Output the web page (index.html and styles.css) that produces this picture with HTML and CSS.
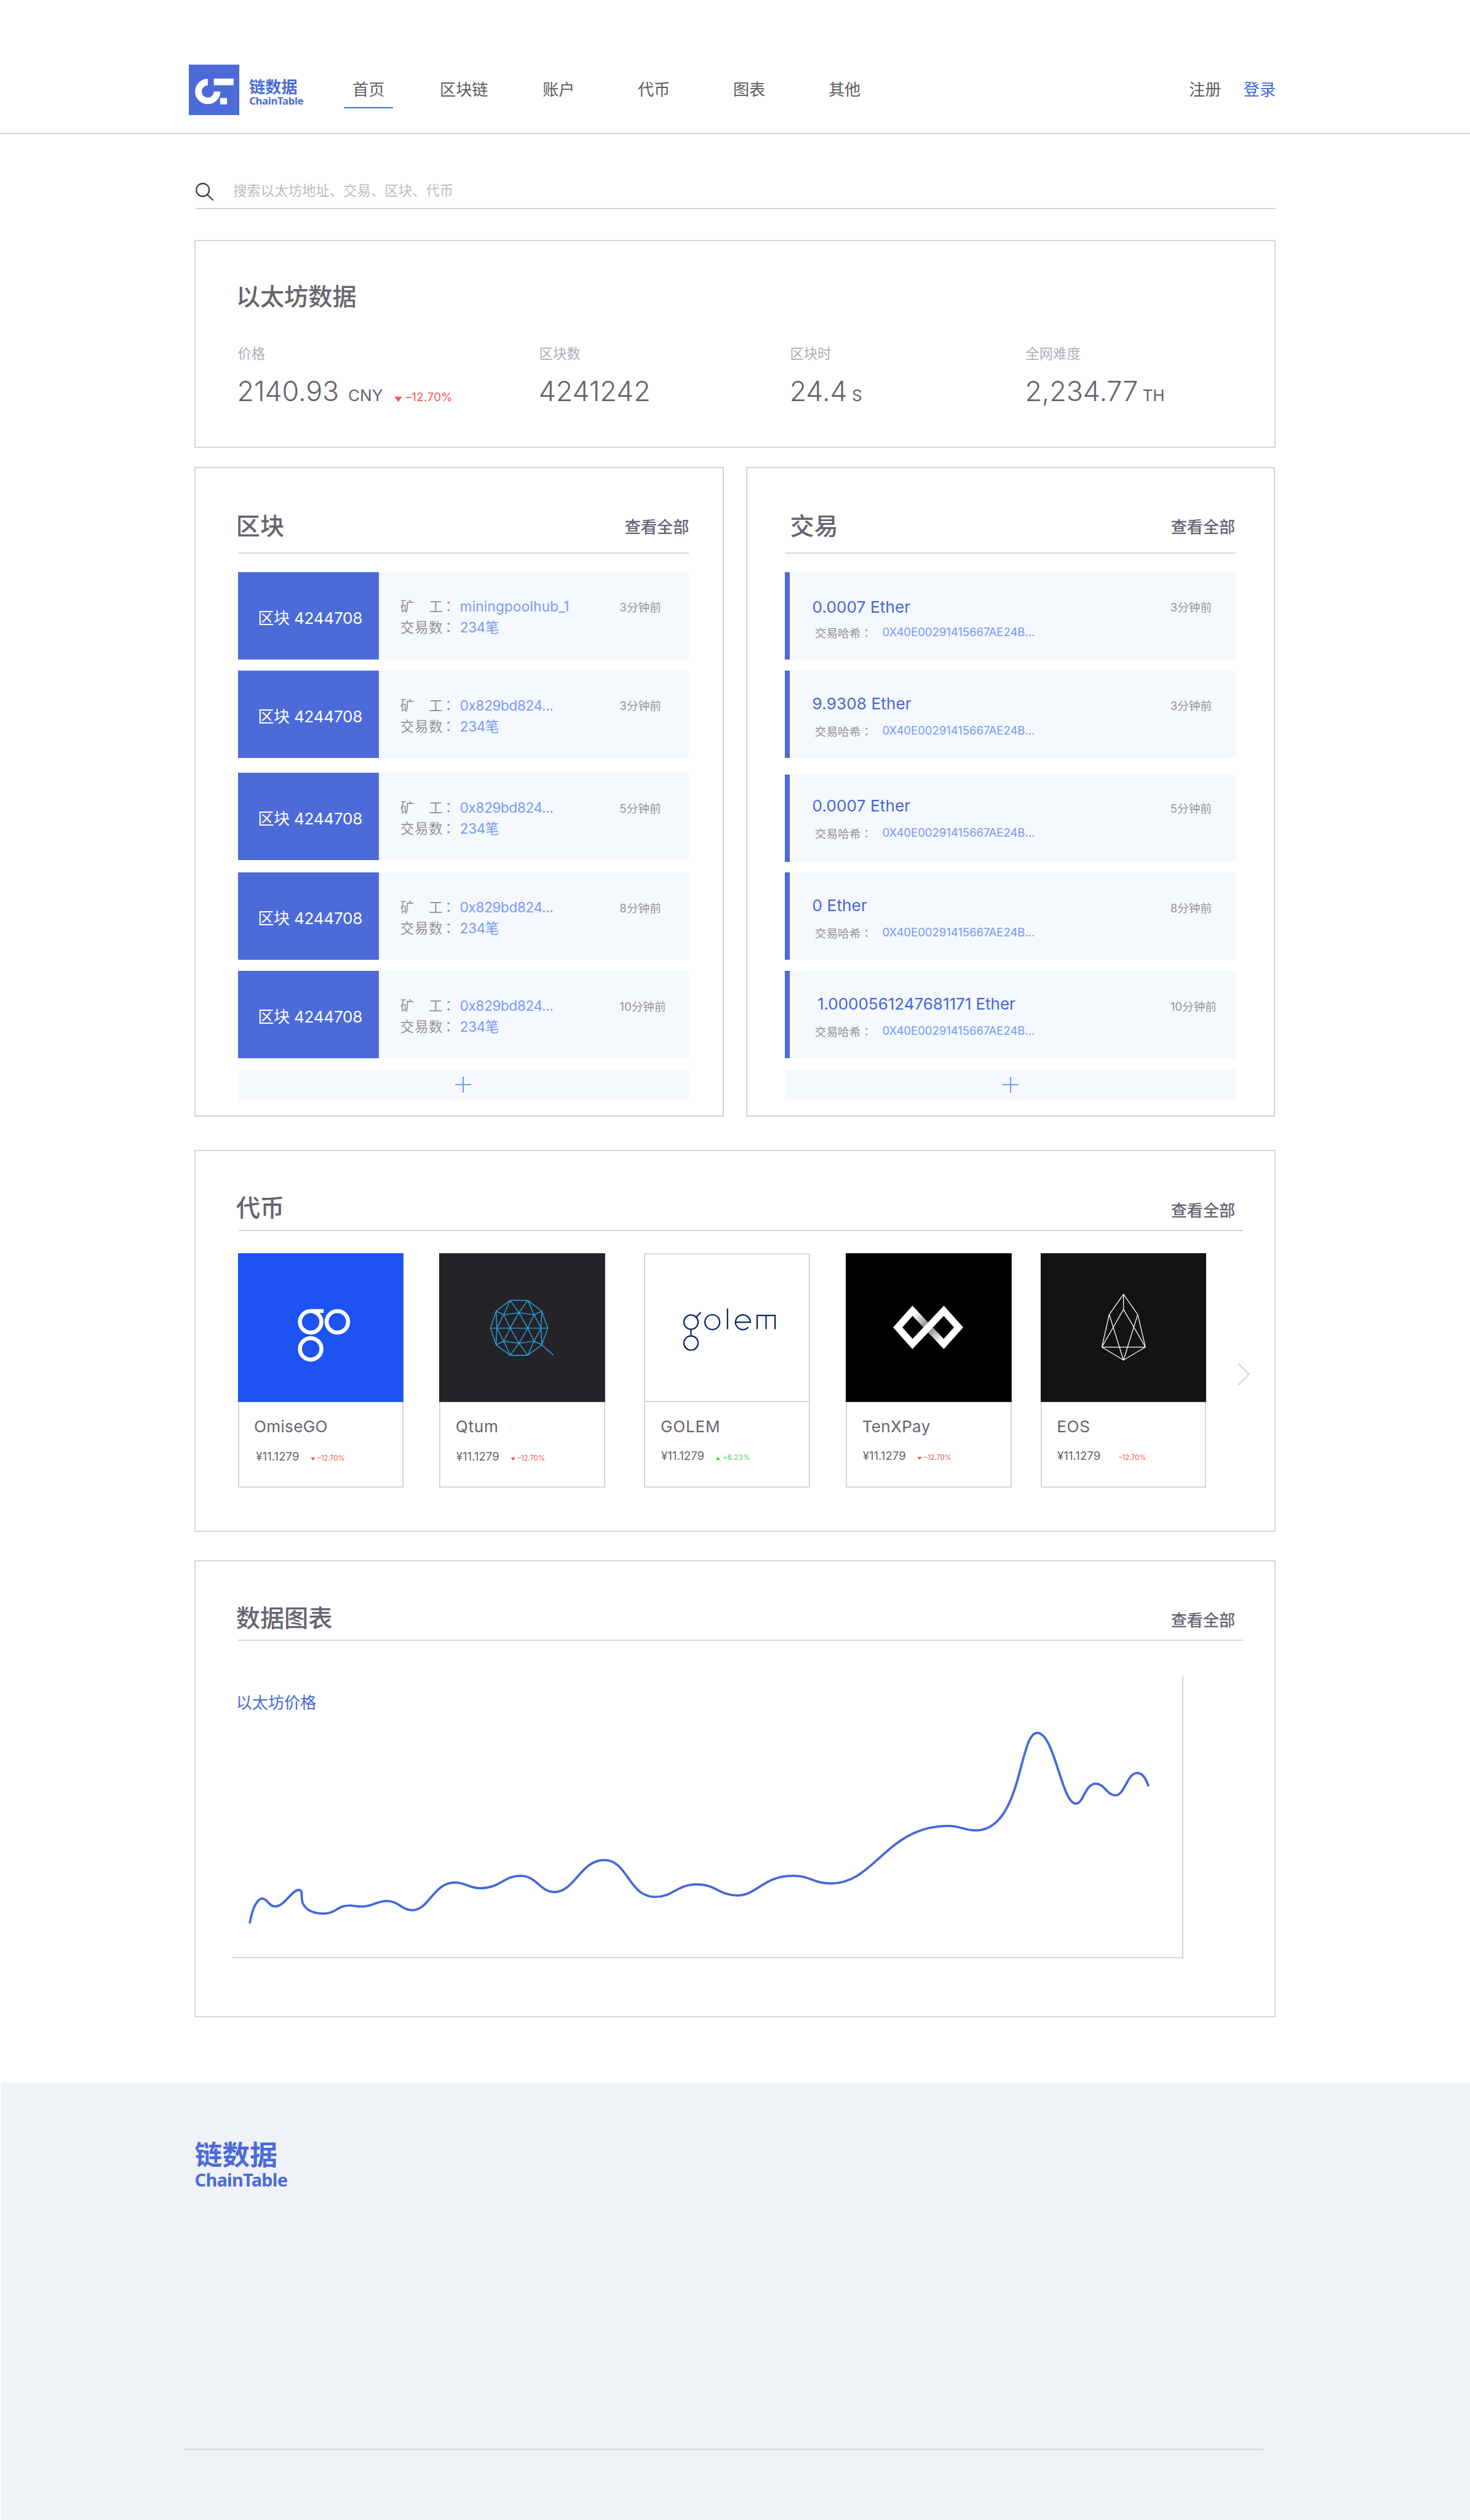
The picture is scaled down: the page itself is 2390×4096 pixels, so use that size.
FILE: index.html
```html
<!DOCTYPE html>
<html>
<head>
<meta charset="utf-8">
<title>链数据 ChainTable</title>
<link rel="stylesheet" href="styles.css">
</head>
<body>
<header class="header">
  <a class="logo">
    <svg class="logo-mark" viewBox="0 0 88 88">
      <rect width="88" height="88" fill="#4c6bd8"/>
      <path d="M33 30.500A16.300 16.300 0 1 0 49.300 46.800" fill="none" stroke="#fff" stroke-width="11.500"/>
      <path d="M43.500 24.500h34.500v11.500h-34.500zM54.500 58h12v11.500h-12z" fill="#fff"/>
    </svg>
    <span class="logo-text"><b class="logo-cn">链数据</b><b class="logo-en">ChainTable</b></span>
  </a>
  <nav class="nav">
    <a class="nav-item active">首页</a>
    <a class="nav-item">区块链</a>
    <a class="nav-item">账户</a>
    <a class="nav-item">代币</a>
    <a class="nav-item">图表</a>
    <a class="nav-item">其他</a>
  </nav>
  <div class="auth"><a>注册</a><a class="login">登录</a></div>
</header>

<main class="main">
  <div class="search">
    <svg class="search-icon" viewBox="0 0 32 32"><g fill="none" stroke="#444" stroke-width="2.500" stroke-linecap="round"><circle cx="12.500" cy="12.500" r="11.200"/><path d="M20.500 21l9.500 9"/></g></svg>
    <span>搜索以太坊地址、交易、区块、代币</span>
  </div>

  <section class="card stats">
    <h2 class="title">以太坊数据</h2>
    <div class="stat-row">
      <div class="stat"><div class="stat-label">价格</div><div class="stat-value">2140.93<span class="unit unit-cny">CNY</span><i class="tri tri-lg"></i><span class="drop">–12.70%</span></div></div>
      <div class="stat"><div class="stat-label">区块数</div><div class="stat-value">4241242</div></div>
      <div class="stat"><div class="stat-label">区块时</div><div class="stat-value">24.4<span class="unit">S</span></div></div>
      <div class="stat"><div class="stat-label">全网难度</div><div class="stat-value">2,234.77<span class="unit">TH</span></div></div>
    </div>
  </section>

  <div class="columns">
    <section class="card blocks">
      <div class="head"><h2 class="title">区块</h2><a class="more">查看全部</a></div>
      <div class="row"><div class="badge">区块 4244708</div><dl class="info"><dt>矿　工<i>：</i></dt><dd class="pool">miningpoolhub_1</dd><dt>交易数<i>：</i></dt><dd>234笔</dd></dl><time>3分钟前</time></div>
      <div class="row"><div class="badge">区块 4244708</div><dl class="info"><dt>矿　工<i>：</i></dt><dd>0x829bd824...</dd><dt>交易数<i>：</i></dt><dd>234笔</dd></dl><time>3分钟前</time></div>
      <div class="row row-3"><div class="badge">区块 4244708</div><dl class="info"><dt>矿　工<i>：</i></dt><dd>0x829bd824...</dd><dt>交易数<i>：</i></dt><dd>234笔</dd></dl><time>5分钟前</time></div>
      <div class="row row-4"><div class="badge">区块 4244708</div><dl class="info"><dt>矿　工<i>：</i></dt><dd>0x829bd824...</dd><dt>交易数<i>：</i></dt><dd>234笔</dd></dl><time>8分钟前</time></div>
      <div class="row"><div class="badge">区块 4244708</div><dl class="info"><dt>矿　工<i>：</i></dt><dd>0x829bd824...</dd><dt>交易数<i>：</i></dt><dd>234笔</dd></dl><time>10分钟前</time></div>
      <div class="add"><svg viewBox="0 0 28 28"><path d="M14 0v28M0 14h28" stroke="#6f9bf6" stroke-width="2.200"/></svg></div>
    </section>

    <section class="card txs">
      <div class="head"><h2 class="title">交易</h2><a class="more">查看全部</a></div>
      <div class="row tx tx-first"><div class="tx-body"><div class="amount">0.0007 Ether</div><div class="hash"><span>交易哈希<i>：</i></span><a>0X40E00291415667AE24B...</a></div></div><time>3分钟前</time></div>
      <div class="row tx"><div class="tx-body"><div class="amount">9.9308 Ether</div><div class="hash"><span>交易哈希<i>：</i></span><a>0X40E00291415667AE24B...</a></div></div><time>3分钟前</time></div>
      <div class="row tx row-3"><div class="tx-body"><div class="amount">0.0007 Ether</div><div class="hash"><span>交易哈希<i>：</i></span><a>0X40E00291415667AE24B...</a></div></div><time>5分钟前</time></div>
      <div class="row tx row-4"><div class="tx-body"><div class="amount">0 Ether</div><div class="hash"><span>交易哈希<i>：</i></span><a>0X40E00291415667AE24B...</a></div></div><time>8分钟前</time></div>
      <div class="row tx"><div class="tx-body"><div class="amount amount-long">1.0000561247681171 Ether</div><div class="hash"><span>交易哈希<i>：</i></span><a>0X40E00291415667AE24B...</a></div></div><time>10分钟前</time></div>
      <div class="add"><svg viewBox="0 0 28 28"><path d="M14 0v28M0 14h28" stroke="#6f9bf6" stroke-width="2.200"/></svg></div>
    </section>
  </div>

  <section class="card tokens">
    <div class="head"><h2 class="title">代币</h2><a class="more">查看全部</a></div>
    <div class="token-row">
      <article class="token omise">
        <svg class="token-art" viewBox="0 0 289 259"><rect width="289" height="259" fill="#1c53f2"/><g fill="none" stroke="#fff" stroke-width="7"><circle cx="126.500" cy="119.500" r="18.700"/><circle cx="173" cy="119.500" r="18.700"/><circle cx="126.500" cy="166.500" r="18.700"/></g><path d="M126.500 97.300H149v6.600H141z" fill="#fff"/></svg>
        <h3>OmiseGO</h3><p class="price price-low">¥11.1279<i class="tri"></i><span class="change">–12.70%</span></p>
      </article>
      <article class="token qtum">
        <svg class="token-art" viewBox="0 0 289 259"><rect width="289" height="259" fill="#242328"/><path fill="none" stroke="#2b96cc" stroke-width="1.700" stroke-linejoin="round" d="M89.400 130.400L99.200 100.900 123.700 82.100H154.300L178.800 100.900 189.200 130.400 178.800 159.400 154.300 177.700H123.700L99.200 159.400ZH189.200M99.200 100.900L112.600 107.100 139 103.600 165.300 107.100 178.800 100.900 177.500 130.400 178.800 159.400 165.300 153.100 139 156.700 112.600 153.100 99.200 159.400 100.400 130.400ZM100.400 130.400L112.600 107.100 123.700 82.100 139 103.600 154.300 82.100 165.300 107.100 177.500 130.400 165.300 153.100 154.300 177.700 139 156.700 123.700 177.700 112.600 153.100ZM112.600 107.100L123.700 130.400 139 103.600 154.300 130.400 165.300 107.100M112.600 153.100L123.700 130.400 139 156.700 154.300 130.400 165.300 153.100M178.800 159.400L199 177.700"/></svg>
        <h3>Qtum</h3><p class="price price-low">¥11.1279<i class="tri"></i><span class="change">–12.70%</span></p>
      </article>
      <article class="token golem">
        <svg class="token-art" viewBox="0 0 289 259"><g fill="none" stroke="#0a2360" stroke-width="2.400"><circle cx="81.400" cy="121" r="12.500"/><circle cx="81.400" cy="157.600" r="12.500"/><path d="M81.400 133.500V145M90 112.500L98.600 103.600"/><circle cx="118.800" cy="121" r="13"/><path d="M145.500 97V133.500M159.500 121H185.500A13 13 0 1 0 182 130M197.500 133.500V109.300H229V133.500M213.200 109.300V133.500"/></g></svg>
        <h3>GOLEM</h3><p class="price">¥11.1279<i class="tri up"></i><span class="change gain">+6.23%</span></p>
      </article>
      <article class="token tenx">
        <svg class="token-art" viewBox="0 0 289 259"><defs><linearGradient id="fold" gradientUnits="userSpaceOnUse" x1="116.300" y1="100.200" x2="170.800" y2="158"><stop offset=".08" stop-color="#fff"/><stop offset=".45" stop-color="#8d8889"/><stop offset=".55" stop-color="#8d8889"/><stop offset=".92" stop-color="#fff"/></linearGradient></defs><rect width="289" height="259"/><g fill="none" stroke-width="12" stroke-miterlimit="8"><path d="M116.300 100.200L170.800 158" stroke="url(#fold)"/><path d="M120 104.200L116.300 100.200 90.600 129 116.300 158 170.800 100.200 196.600 129 170.800 158 167 154" stroke="#fff"/></g></svg>
        <h3>TenXPay</h3><p class="price">¥11.1279<i class="tri"></i><span class="change">–12.70%</span></p>
      </article>
      <article class="token eos">
        <svg class="token-art" viewBox="0 0 289 259"><rect width="289" height="259" fill="#131313"/><path fill="none" stroke="#fff" stroke-width="1.400" stroke-linejoin="round" d="M144.200 71.400L119.400 106.700 106.500 163.400 144.200 186.100 182.400 163.400 169 106.700ZV97.800L106.500 163.400H182.400L144.200 97.800M119.400 106.700L144.200 186.100 169 106.700"/></svg>
        <h3>EOS</h3><p class="price">¥11.1279<i class="tri none"></i><span class="change">–12.70%</span></p>
      </article>
      <svg class="next" viewBox="0 0 22 40"><path d="M1.500 1.500L20 20 1.500 38.500" fill="none" stroke="#d2d2d2" stroke-width="2.200"/></svg>
    </div>
  </section>

  <section class="card charts">
    <div class="head"><h2 class="title">数据图表</h2><a class="more">查看全部</a></div>
    <div class="plot">
      <h4>以太坊价格</h4>
      <svg viewBox="0 0 1657 491"><path fill="none" stroke="#4567dc" stroke-width="4" d="M31.100 431C36 402 45 387.500 53.100 387.500C62 387.500 64 401.400 75.200 401.400C92 401.400 104 372.500 116.800 372.500C125 372.500 119 386 124 397C130 409 143 413.800 160.900 413.800C181 413.800 183 399.800 205 399.800C214 399.800 217 401.600 227 401.600C246 401.600 251 391.800 269.900 391.800C290 391.800 296 407.900 314 407.900C344 407.900 350 359.700 388.700 359.700C407 359.700 413 369.800 434 369.800C465 369.800 475 347.900 502.500 347.900C531 347.900 536 376.300 562.500 376.300C596 376.300 608 320.600 648.300 320.600C690 320.600 690 384.800 737.600 384.800C768 384.800 775 362.900 809.900 362.900C843 362.900 849 382.200 879.700 382.200C915 382.200 925 347.900 977.600 347.900C1007 347.900 1013 361.300 1043.800 361.300C1120 361.300 1140 261.100 1248.300 261.100C1268 261.100 1276 269.100 1294.800 269.100C1377 269.100 1370 99.300 1402.500 99.300C1433 99.300 1445 222.500 1469.900 222.500C1483 222.500 1486 187.700 1504.200 187.700C1520 187.700 1524 208 1538.500 208C1555 208 1559 169 1576.400 169C1587 169 1592 180 1596.500 192.500"/></svg>
    </div>
  </section>
</main>

<footer class="footer">
  <b class="logo-cn">链数据</b>
  <b class="logo-en">ChainTable</b>
  <hr>
</footer>
</body>
</html>
```
FILE: styles.css
```css
/* 1rem is 10 design pixels; the design canvas is 2560 wide */
html { font-size: 9.3359px; }
* { box-sizing: border-box; margin: 0; padding: 0; }
body {
  width: 256rem;
  height: 438.7rem;
  display: flex;
  flex-direction: column;
  overflow: hidden;
  background: #fff;
  color: #66646e;
  font-family: Inter, "Noto Sans CJK SC", sans-serif;
  font-size: 2.8rem;
  line-height: 2.8rem;
  white-space: nowrap;
}
svg { display: block; }
h2, h3, h4 { font-weight: 400; }

.header {
  height: 23.4rem;
  padding-top: 11.2rem;
  padding-left: 32.9rem;
  display: flex;
  align-items: flex-start;
  border-bottom: 2px solid #d5d5d5;
  color: #5c5c5c;
}
.logo { display: flex; width: 27rem; }
.logo-mark { width: 8.8rem; height: 8.8rem; }
.logo-text { display: flex; flex-direction: column; padding: 2.4rem 0 0 1.7rem; color: #4c6bd8; }
.logo-cn { font-weight: 700; font-family: "Noto Sans CJK SC", sans-serif; line-height: 2.8rem; }
.logo-en { font-family: "Noto Sans", sans-serif; font-size: 1.8rem; line-height: 2.4rem; letter-spacing: -.04rem; }
.nav { display: flex; padding-top: 3rem; }
.nav-item { height: 4.7rem; margin-right: 11rem; }
.nav-item.active { padding: 0 1.5rem; margin-right: 8.1rem; border-bottom: 2px solid #4c6bd8; }
.nav-item:nth-child(2) { margin-right: 9.5rem; }
.auth { display: flex; gap: 3.9rem; padding-top: 3rem; margin-left: 46.2rem; }
.login { color: #4666d8; }

.main { width: 188.2rem; margin-left: 33.9rem; flex: none; }
.search {
  display: flex;
  height: 13rem;
  margin-left: .2rem;
  padding-top: 8.4rem;
  border-bottom: 2px solid #d5d5d5;
  font-size: 2.4rem;
  color: #bcbcbc;
}
.search-icon { width: 3.2rem; height: 3.2rem; margin: 0 3.3rem 0 0; }

.card { outline: 2px solid #d6d6d6; outline-offset: -2px; }
.title { font-size: 4.2rem; line-height: 4.2rem; font-weight: 500; }
.more { font-weight: 500; }
.head { display: flex; justify-content: space-between; border-bottom: 2px solid #d6d6d6; }

.stats { margin-top: 5.4rem; height: 36.2rem; padding: 7.7rem 0 0 7.4rem; }
.stats .title { margin-left: -.2rem; }
.stat-row { display: grid; grid-template-columns: 52.5rem 43.7rem 41rem 1fr; padding-top: 6.7rem; }
.stat-label { font-size: 2.4rem; line-height: 2.4rem; color: #b0adb8; padding-left: .1rem; }
.stat-value { font-size: 4.8rem; line-height: 5.6rem; font-weight: 300; margin-top: 2.5rem; display: flex; align-items: baseline; letter-spacing: -.01rem; }
.unit { font-size: 2.8rem; font-weight: 400; margin-left: .8rem; }
.unit-cny { margin-left: 1.6rem; }
.drop { color: #fa5456; font-size: 2rem; font-weight: 400; letter-spacing: .04rem; margin-left: .6rem; }
.tri { width: .8rem; height: .6rem; background: #fa5456; clip-path: polygon(0 0, 100% 0, 50% 100%); }
.tri-lg { width: 1.4rem; height: .95rem; margin-left: 2rem; align-self: flex-end; transform: translateY(-2rem); }

.columns { display: flex; gap: 3.8rem; margin-top: 3.3rem; }
.columns .card { width: 92.2rem; height: 113.1rem; }
.columns .blocks { padding: 0 6.1rem 0 7.5rem; }
.columns .txs { padding: 0 6.8rem; }
.columns .head { height: 15.1rem; margin-bottom: 3.2rem; }
.columns .title { padding-top: 8.15rem; margin-left: -.3rem; }
.columns .more { padding-top: 9.1rem; }
.columns .txs .title { margin-left: .9rem; }
.txs .more { margin-right: .2rem; }
.row { display: flex; height: 15.2rem; margin-bottom: 1.95rem; background: #f5f8fd; }
.row-3 { margin-top: 2.6rem; margin-bottom: 2.2rem; }
.tx.row-3 { margin-top: 2.9rem; margin-bottom: 1.9rem; }
.row-4 { margin-bottom: 1.9rem; }
.badge { width: 24.6rem; padding: .4rem 0 0 3.5rem; line-height: 15.2rem; height: 15.2rem; background: #4c6bd8; color: #fff; letter-spacing: -.03rem; overflow: hidden; }
.info { display: grid; grid-template-columns: 10.4rem auto; align-content: start; padding: 4.25rem 0 0 3.7rem; font-size: 2.4rem; line-height: 3.64rem; }
.info dt { color: #939298; letter-spacing: .1rem; }
.info i, .hash i { font-style: normal; font-family: "Noto Sans CJK TC", sans-serif; line-height: 1; }
.info i { margin-left: -.3rem; }
.info dd { color: #7599f7; letter-spacing: -.03rem; }
.info .pool { letter-spacing: .03rem; }
.row time { width: 12.1rem; margin-left: auto; padding-top: 5.3rem; font-size: 2rem; line-height: 2rem; color: #939298; }
.tx { border-left: .95rem solid #4c6bd8; }
.tx time { width: 11.5rem; }
.tx-body { padding: 4.35rem 0 0 3.9rem; }
.amount { color: #4666d8; letter-spacing: .01rem; }
.amount-long { padding-left: .9rem; letter-spacing: -.01rem; }
.hash { display: flex; margin-top: 2.35rem; padding-left: .45rem; font-size: 2rem; line-height: 2rem; color: #939298; }
.hash span { width: 11.75rem; }
.hash a { color: #7599f7; letter-spacing: -.01rem; }
.tx-first .tx-body { padding-top: 4.75rem; }
.tx-first .hash { margin-top: 2.05rem; }
.tx.row-3 .tx-body, .tx.row-3 time { margin-top: -.3rem; }
.add { display: flex; align-items: center; justify-content: center; height: 5.4rem; background: #f5f8fd; }
.add svg { width: 2.8rem; height: 2.8rem; }

.tokens { height: 66.5rem; margin-top: 5.8rem; padding: 0 5.6rem 0 7.5rem; }
.tokens .head, .charts .head { height: 14.1rem; }
.tokens .title { padding-top: 7.9rem; margin-left: -.3rem; }
.tokens .more, .charts .more { padding-top: 9.2rem; margin-right: 1.4rem; }
.token-row { display: flex; align-items: flex-start; margin-top: 3.9rem; }
.token { width: 28.9rem; height: 40.8rem; outline: 2px solid #d6d6d6; outline-offset: -2px; }
/* the artwork covers the card's own outline */
.token-art { position: relative; z-index: 1; width: 28.9rem; height: 25.9rem; }
.golem .token-art { border-bottom: 2px solid #d6d6d6; }
.qtum { margin-left: 6.2rem; }
.golem { margin-left: 6.8rem; }
.tenx { margin-left: 6.2rem; }
.eos { margin-left: 5rem; }
.token h3 { padding: 2.9rem 0 0 2.85rem; font-size: 2.8rem; line-height: 2.8rem; letter-spacing: .03rem; }
.qtum h3, .golem h3, .eos h3 { letter-spacing: .08rem; }
.price { display: flex; align-items: baseline; padding: 2.8rem 0 0 2.95rem; font-size: 2rem; line-height: 2rem; }
.price-low { padding-top: 2.9rem; }
.omise .price { padding-left: 3.2rem; }
.price .tri { margin-left: 2rem; align-self: flex-end; transform: translateY(-.6rem); }
.price .up { background: #4ccb4c; clip-path: polygon(50% 0, 100% 100%, 0 100%); }
.price .none { visibility: hidden; }
.change { margin-left: .4rem; font-size: 1.2rem; color: #fa5456; }
.gain { color: #4ccb4c; letter-spacing: .05rem; }
.next { width: 2.2rem; height: 4rem; margin: 19.1rem 0 0 5.4rem; flex: none; }

.charts { height: 79.6rem; margin-top: 4.9rem; padding: 0 5.6rem 0 7.5rem; }
.charts .title { padding-top: 8rem; margin-left: -.3rem; }
.plot { width: 165.7rem; height: 49.1rem; margin: 6.1rem 0 0 -1rem; border-right: 2px solid #d6d6d6; border-bottom: 2px solid #d6d6d6; }
.plot h4 { height: 0; padding: 0 0 0 .7rem; line-height: 9.5rem; color: #4666d8; font-size: 2.8rem; }
.plot svg { width: 165.7rem; height: 49.1rem; }

.footer { flex: 1; margin-top: 11.4rem; margin-left: 1px; padding: 10rem 0 0 33.8rem; background: #eff3f8; color: #4c6bd8; display: flex; flex-direction: column; }
.footer .logo-cn { font-size: 4.8rem; line-height: 4.8rem; }
.footer .logo-en { font-size: 3.1rem; line-height: 4rem; letter-spacing: -.08rem; margin-top: .1rem; }
.footer hr { width: 188rem; height: 2px; margin: 44.8rem 0 0 -1.9rem; border: 0; background: #d6d8d8; }
```
